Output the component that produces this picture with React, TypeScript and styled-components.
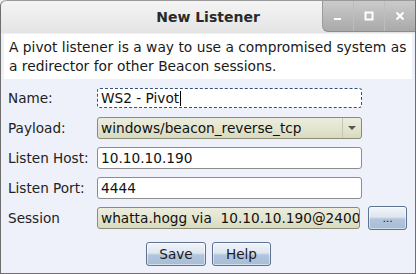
import React, { useState } from "react";
import styled, { createGlobalStyle } from "styled-components";

const GlobalStyle = createGlobalStyle`
  html, body {
    margin: 0;
    padding: 0;
    background: #eef0fa;
  }
  body {
    font-family: "DejaVu Sans", Verdana, sans-serif;
  }
`;

const Window = styled.div`
  width: 416px;
  height: 274px;
  box-sizing: border-box;
  display: flex;
  flex-direction: column;
  background: #eef0fa;
  border-left: 1px solid #6e6e6e;
  border-right: 1px solid #6e6e6e;
  border-bottom: 1px solid #6e6e6e;
  border-top-left-radius: 6px;
  overflow: hidden;
`;

const TitleBar = styled.div`
  height: 33px;
  flex: none;
  position: relative;
  display: flex;
  align-items: center;
  justify-content: center;
  background: linear-gradient(#f4f4f4, #e4e4e4);
  font-size: 14px;
  font-weight: bold;
  color: #2a2a2a;
  border-top: 1px solid #9a9a9a;
  border-top-left-radius: 6px;
  box-sizing: border-box;
`;

const WinControls = styled.div`
  position: absolute;
  top: 0;
  right: 0;
  height: 30px;
  display: flex;
  background: linear-gradient(#cbcbcb, #a9a9a9);
  border-bottom-left-radius: 6px;
  border-left: 1px solid #9a9a9a;
  border-bottom: 1px solid #8c8c8c;
`;

const WinButton = styled.div<{ $last?: boolean }>`
  width: 30px;
  display: flex;
  align-items: center;
  justify-content: center;
  border-right: ${(p) => (p.$last ? "none" : "1px solid #bdbdbd")};
`;

const Description = styled.div`
  margin: 1px 3px 0;
  background: #ffffff;
  padding: 4px 4px 4px 5px;
  font-size: 13.8px;
  line-height: 18.5px;
  color: #1a1a1a;
`;

const Form = styled.div`
  display: flex;
  flex-direction: column;
  padding: 4px 8px 0 7px;
`;

const Row = styled.div`
  height: 30px;
  display: flex;
  align-items: center;
`;

const Label = styled.div`
  width: 89px;
  flex: none;
  font-size: 13.6px;
  color: #222;
`;

const Field = styled.div<{ $variant?: "focus" | "combo" | "plain" }>`
  width: 265px;
  height: ${(p) => (p.$variant === "focus" ? "20px" : "22px")};
  box-sizing: border-box;
  display: flex;
  align-items: center;
  padding-left: 3px;
  font-size: 13.7px;
  color: #111;
  border-radius: 3px;
  background: ${(p) =>
    p.$variant === "combo"
      ? "linear-gradient(#ecedde, #e3e5cf 50%, #d8dbbf)"
      : "#ffffff"};
  border: ${(p) =>
    p.$variant === "focus"
      ? "1px dashed #31507a"
      : p.$variant === "combo"
      ? "1px solid #8a8c76"
      : "1px solid #8c8c8c"};
  white-space: pre;
  overflow: hidden;
`;

const Caret = styled.span`
  display: inline-block;
  width: 1px;
  height: 15px;
  background: #000;
  margin-left: 1px;
`;

const ComboText = styled.span`
  flex: 1;
`;

const Arrow = styled.div`
  width: 18px;
  height: 100%;
  border-left: 1px solid #c6c8b4;
  display: flex;
  align-items: center;
  justify-content: center;
`;

const Button = styled.button<{ $w: number }>`
  width: ${(p) => p.$w}px;
  height: 24px;
  box-sizing: border-box;
  padding: 0;
  font-family: "DejaVu Sans", Verdana, sans-serif;
  font-size: 13.6px;
  color: #1a1a1a;
  border: 1px solid #5d7391;
  border-radius: 3px;
  background: linear-gradient(#f2f5fa, #dfe6f0 45%, #b2c5dc 55%, #a7bcd6);
  box-shadow: inset 0 0 0 1px rgba(255, 255, 255, 0.5);
`;

const SideButton = styled(Button)`
  margin-left: 8px;
  font-size: 11px;
`;

const Buttons = styled.div`
  display: flex;
  justify-content: center;
  gap: 6px;
  margin-top: 9px;
  padding-left: 2px;
`;

const App = () => {
  const [name] = useState("WS2 - Pivot");
  return (
    <Window>
      <GlobalStyle />
      <TitleBar>
        New Listener
        <WinControls>
          <WinButton>
            <svg width="10" height="10" viewBox="0 0 10 10">
              <rect x="1" y="7" width="7" height="2" fill="#fff" />
            </svg>
          </WinButton>
          <WinButton>
            <svg width="10" height="10" viewBox="0 0 10 10">
              <rect x="1.5" y="1.5" width="7" height="7" fill="none" stroke="#fff" strokeWidth="2" />
            </svg>
          </WinButton>
          <WinButton $last>
            <svg width="10" height="10" viewBox="0 0 10 10">
              <path d="M1.5 1.5 L8.5 8.5 M8.5 1.5 L1.5 8.5" stroke="#fff" strokeWidth="2" />
            </svg>
          </WinButton>
        </WinControls>
      </TitleBar>
      <Description>
        A pivot listener is a way to use a compromised system as a redirector
        for other Beacon sessions.
      </Description>
      <Form>
        <Row>
          <Label>Name:</Label>
          <Field $variant="focus">
            {name}
            <Caret />
          </Field>
        </Row>
        <Row>
          <Label>Payload:</Label>
          <Field $variant="combo">
            <ComboText>windows/beacon_reverse_tcp</ComboText>
            <Arrow>
              <svg width="8" height="5" viewBox="0 0 8 5">
                <path d="M0 0 H8 L4 4 Z" fill="#555" />
              </svg>
            </Arrow>
          </Field>
        </Row>
        <Row>
          <Label>Listen Host:</Label>
          <Field $variant="plain">10.10.10.190</Field>
        </Row>
        <Row>
          <Label>Listen Port:</Label>
          <Field $variant="plain">4444</Field>
        </Row>
        <Row>
          <Label>Session</Label>
          <Field $variant="combo">{"whatta.hogg via  10.10.10.190@2400"}</Field>
          <SideButton $w={39}>...</SideButton>
        </Row>
        <Buttons>
          <Button $w={60}>Save</Button>
          <Button $w={59}>Help</Button>
        </Buttons>
      </Form>
    </Window>
  );
};

export default App;
